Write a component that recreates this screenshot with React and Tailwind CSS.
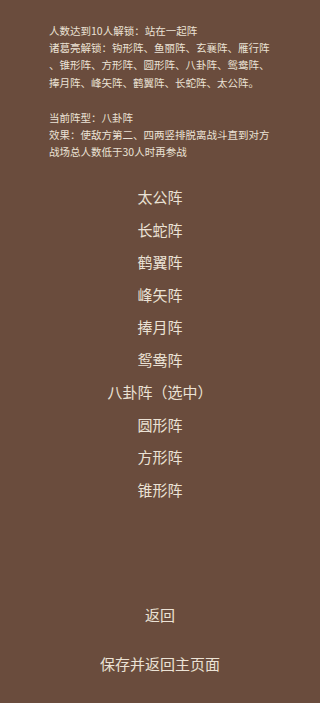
// App.jsx
// Formation select screen: unlock info on top, formation list, two buttons at the bottom

const formations = [
  '太公阵',
  '长蛇阵',
  '鹤翼阵',
  '峰矢阵',
  '捧月阵',
  '鸳鸯阵',
  '八卦阵（选中）',
  '圆形阵',
  '方形阵',
  '锥形阵',
]

function App() {
  return (
    <div
      className="w-[320px] h-[703px] bg-[#6a4c3d] text-[#ebe2d5] flex flex-col overflow-hidden"
      style={{ fontFamily: '"Noto Sans CJK SC", "Noto Sans", sans-serif' }}
    >
      {/* info text */}
      <div className="pl-[49px] pt-[22px] text-[10.5px] leading-[17.2px]">
        <p>人数达到10人解锁：站在一起阵</p>
        <p>诸葛亮解锁：钩形阵、鱼丽阵、玄襄阵、雁行阵</p>
        <p>、锥形阵、方形阵、圆形阵、八卦阵、鸳鸯阵、</p>
        <p>捧月阵、峰矢阵、鹤翼阵、长蛇阵、太公阵。</p>
        <p className="mt-[18px]">当前阵型：八卦阵</p>
        <p>效果：使敌方第二、四两竖排脱离战斗直到对方</p>
        <p>战场总人数低于30人时再参战</p>
      </div>

      {/* formation list */}
      <div className="mt-[21px] flex flex-col items-center text-[15px] leading-[32.5px]">
        {formations.map((f) => (
          <button key={f} className="block">
            {f}
          </button>
        ))}
      </div>

      {/* bottom buttons */}
      <div className="mt-auto pb-[28px] flex flex-col items-center text-[15px] gap-[27px] leading-[22px]">
        <button>返回</button>
        <button>保存并返回主页面</button>
      </div>
    </div>
  )
}

export default App
